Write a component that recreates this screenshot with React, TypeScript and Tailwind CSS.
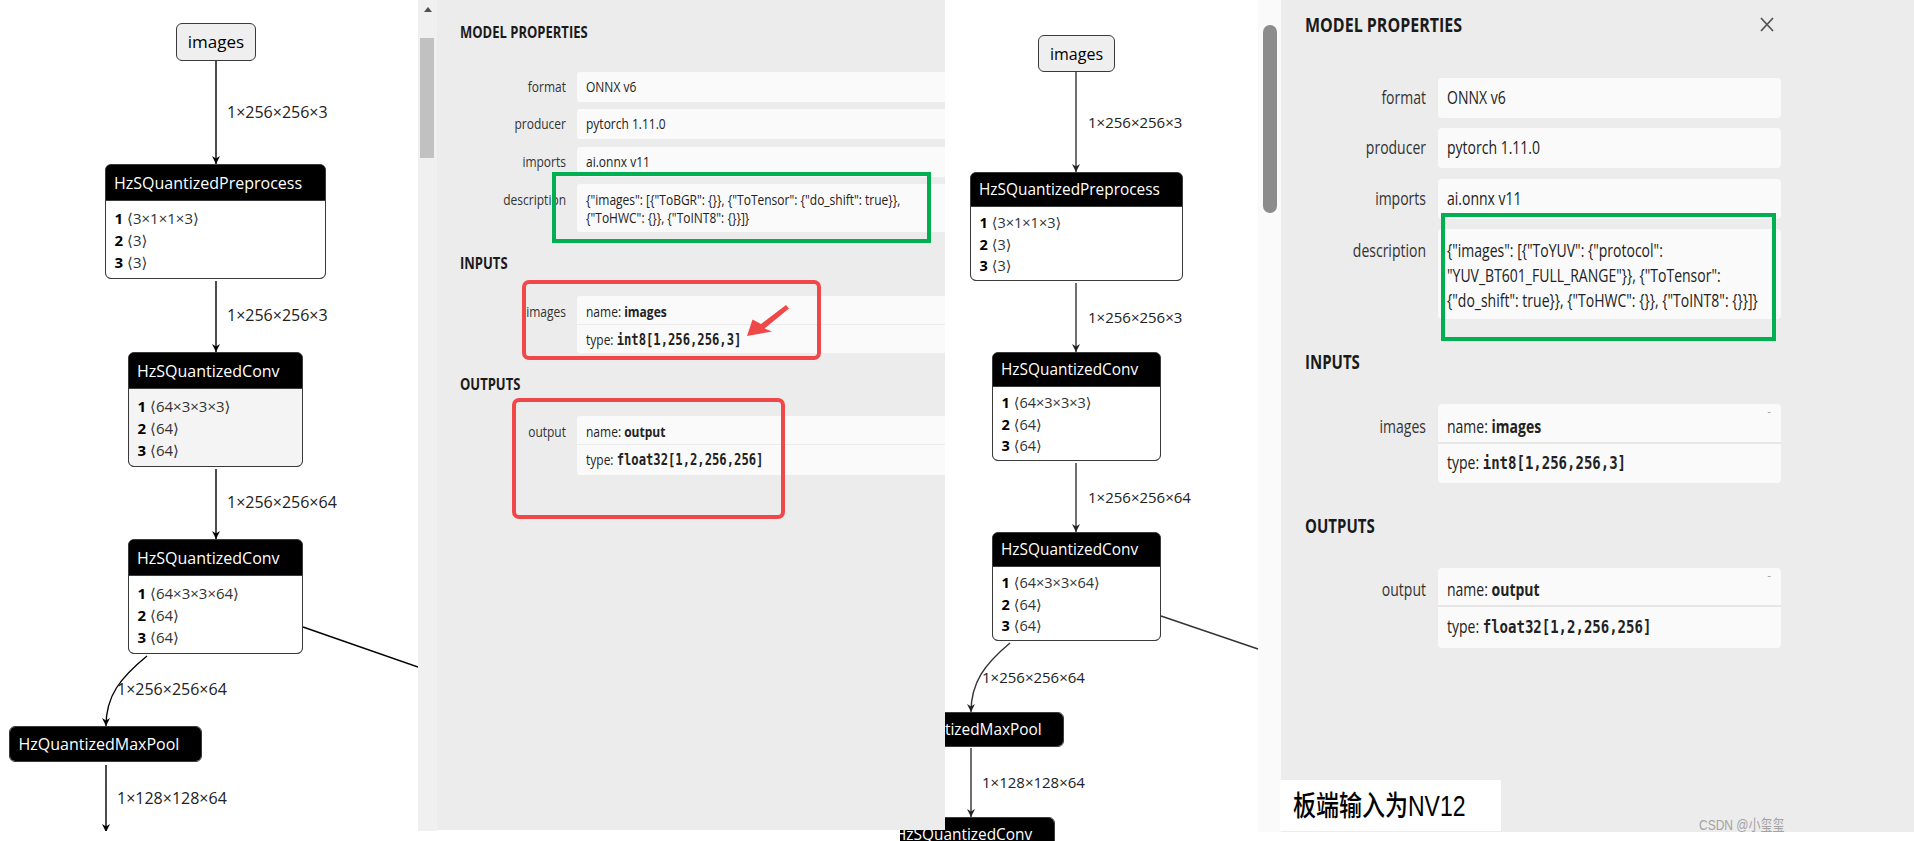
import React from "react";

type Row = [string, string];
type NodeSpec = { x: number; y: number; w: number; title: string; rows?: Row[]; shade?: boolean };

const SZ = {
  L: {
    head: "h-[36px] leading-[36px] text-[16px] pl-[8px] border-b border-[#3a3a3a]",
    only: "h-[34px] leading-[34px] text-[16px] pl-[8.5px]",
    body: "pt-[6px] pb-[5px] pl-[8.5px]",
    row: "h-[22px] leading-[22px] text-[15px]",
  },
  R: {
    head: "h-[34px] leading-[34px] text-[15.4px] pl-[8px] border-b border-[#3a3a3a]",
    only: "h-[33px] leading-[33px] text-[15.4px] pl-[8px]",
    body: "pt-[5px] pb-[3.5px] pl-[8.5px]",
    row: "h-[21.5px] leading-[21.5px] text-[14.5px]",
  },
};

function T({ children, c = "" }: { children: React.ReactNode; c?: string }) {
  return <span className={"inline-block scale-y-[1.25] " + c}>{children}</span>;
}

function GNode({ n, s }: { n: NodeSpec; s: "L" | "R" }) {
  const c = SZ[s];
  return (
    <div
      className="absolute rounded-[6px] border-[1.5px] border-[#3a3a3a] overflow-hidden bg-black"
      style={{ left: n.x, top: n.y, width: n.w }}
    >
      <div className={"bg-black text-white whitespace-nowrap " + (n.rows ? c.head : c.only)}>{n.title}</div>
      {n.rows && (
        <div className={(n.shade ? "bg-[#f4f4f4] " : "bg-white ") + c.body}>
          {n.rows.map(([a, b]) => (
            <div key={a} className={"whitespace-nowrap " + c.row}>
              <span className="font-bold text-black">{a}</span>
              <span className="ml-[4px] text-[#333] font-['Open_Sans','DejaVu_Sans',sans-serif]">
                {"\u27E8" + b + "\u27E9"}
              </span>
            </div>
          ))}
        </div>
      )}
    </div>
  );
}

function InputNode({ x, y, w, h, big }: { x: number; y: number; w: number; h: number; big: boolean }) {
  return (
    <div
      className={
        "absolute rounded-[6px] border-[1.5px] border-[#3a3a3a] bg-[#efefef] flex items-center justify-center text-black " +
        (big ? "text-[17px]" : "text-[16px]")
      }
      style={{ left: x, top: y, width: w, height: h }}
    >
      images
    </div>
  );
}

function ELabel({ x, y, t, big }: { x: number; y: number; t: string; big: boolean }) {
  return (
    <div
      className={
        "absolute whitespace-nowrap leading-[20px] text-[#222] " + (big ? "text-[16px]" : "text-[15px]")
      }
      style={{ left: x, top: y }}
    >
      {t}
    </div>
  );
}

function LeftGraph() {
  const nodes: NodeSpec[] = [
    { x: 105, y: 164, w: 221, title: "HzSQuantizedPreprocess", rows: [["1", "3×1×1×3"], ["2", "3"], ["3", "3"]] },
    { x: 128, y: 352, w: 175, title: "HzSQuantizedConv", rows: [["1", "64×3×3×3"], ["2", "64"], ["3", "64"]], shade: true },
    { x: 128, y: 539, w: 175, title: "HzSQuantizedConv", rows: [["1", "64×3×3×64"], ["2", "64"], ["3", "64"]] },
    { x: 9, y: 726, w: 193, title: "HzQuantizedMaxPool" },
  ];
  return (
    <div className="relative w-[418px] h-[831px] shrink-0 bg-white">
      <svg className="absolute left-0 top-0" width="418" height="831">
        <defs>
          <marker id="arrL" viewBox="0 0 10 10" refX="10" refY="5" markerWidth="8" markerHeight="8" markerUnits="userSpaceOnUse" orient="auto">
            <path d="M0,0 L10,5 L0,10 L3,5 z" fill="#000" />
          </marker>
        </defs>
        <g stroke="#000" strokeWidth="1.4" fill="none">
          <path d="M216,61 V164" markerEnd="url(#arrL)" />
          <path d="M216,281 V352" markerEnd="url(#arrL)" />
          <path d="M216,469 V539" markerEnd="url(#arrL)" />
          <path d="M147,656 C120,678 106,696 106,726" markerEnd="url(#arrL)" />
          <path d="M303,627 L418,667" />
          <path d="M106,765 V832" markerEnd="url(#arrL)" />
        </g>
      </svg>
      <InputNode x={176} y={23} w={80} h={38} big={true} />
      {nodes.map((n, i) => (
        <GNode key={i} n={n} s="L" />
      ))}
      <ELabel x={227} y={102} t="1×256×256×3" big={true} />
      <ELabel x={227} y={305} t="1×256×256×3" big={true} />
      <ELabel x={227} y={492} t="1×256×256×64" big={true} />
      <ELabel x={117} y={679} t="1×256×256×64" big={true} />
      <ELabel x={117} y={788} t="1×128×128×64" big={true} />
    </div>
  );
}

function RightGraph() {
  const nodes: NodeSpec[] = [
    { x: 25, y: 172, w: 213, title: "HzSQuantizedPreprocess", rows: [["1", "3×1×1×3"], ["2", "3"], ["3", "3"]] },
    { x: 47, y: 352, w: 169, title: "HzSQuantizedConv", rows: [["1", "64×3×3×3"], ["2", "64"], ["3", "64"]] },
    { x: 47, y: 532, w: 169, title: "HzSQuantizedConv", rows: [["1", "64×3×3×64"], ["2", "64"], ["3", "64"]] },
    { x: -67, y: 712, w: 186, title: "HzQuantizedMaxPool" },
  ];
  return (
    <div className="relative w-[313px] h-[832px] shrink-0 bg-white">
      <svg className="absolute left-0 top-0 overflow-visible" width="313" height="841">
        <defs>
          <marker id="arrR" viewBox="0 0 10 10" refX="10" refY="5" markerWidth="8" markerHeight="8" markerUnits="userSpaceOnUse" orient="auto">
            <path d="M0,0 L10,5 L0,10 L3,5 z" fill="#222" />
          </marker>
        </defs>
        <g stroke="#333" strokeWidth="1.4" fill="none">
          <path d="M131,72 V172" markerEnd="url(#arrR)" />
          <path d="M131,283 V352" markerEnd="url(#arrR)" />
          <path d="M131,463 V532" markerEnd="url(#arrR)" />
          <path d="M65,643 C40,664 26,682 26,712" markerEnd="url(#arrR)" />
          <path d="M216,616 L313,649" />
          <path d="M26,748 V817" markerEnd="url(#arrR)" />
        </g>
      </svg>
      <InputNode x={93} y={35} w={77} h={37} big={false} />
      {nodes.map((n, i) => (
        <GNode key={i} n={n} s="R" />
      ))}
      <div className="absolute left-[-45px] top-[817px] w-[160px] h-[30px] overflow-hidden">
        <GNode n={{ x: -14, y: 0, w: 169, title: "HzSQuantizedConv" }} s="R" />
      </div>
      <ELabel x={143} y={112} t="1×256×256×3" big={false} />
      <ELabel x={143} y={307} t="1×256×256×3" big={false} />
      <ELabel x={143} y={487} t="1×256×256×64" big={false} />
      <ELabel x={37} y={667} t="1×256×256×64" big={false} />
      <ELabel x={37} y={772} t="1×128×128×64" big={false} />
    </div>
  );
}

function LeftScroll() {
  return (
    <div className="w-[19px] h-[831px] shrink-0 bg-[#f0f0f0] flex flex-col items-start pt-[7px]">
      <svg className="ml-[5.5px]" width="8" height="5" viewBox="0 0 8 5">
        <path d="M0,5 L4,0 L8,5 z" fill="#505050" />
      </svg>
      <div className="mt-[26px] ml-[2px] w-[14px] h-[120px] bg-[#c1c1c1]" />
    </div>
  );
}

function RightScroll() {
  return (
    <div className="w-[23px] h-[832px] shrink-0 bg-[#fafafa] pt-[25px] pl-[5px]">
      <div className="w-[14px] h-[188px] rounded-full bg-[#8c8c8c]" />
    </div>
  );
}

const MONO = "font-bold font-['DejaVu_Sans_Mono','Liberation_Mono',monospace]";

function LeftPanel() {
  const lab = "w-[129px] shrink-0 text-right text-[#333]";
  const val = "ml-[11px] w-[440px] shrink-0 bg-[#fafafa] rounded-[3px] pl-[9px] text-[#222] whitespace-nowrap";
  const head = "pl-[23px] h-[20px] font-bold text-[13px] leading-[20px] text-[#1a1a1a]";
  return (
    <div className="relative z-10 w-[508px] h-[830px] shrink-0 bg-[#ececec] overflow-hidden text-[12px]">
      <div className={head + " mt-[22px]"}><T>MODEL PROPERTIES</T></div>
      <div className="mt-[30px] flex leading-[30px]">
        <div className={lab}><T>format</T></div>
        <div className={val + " h-[30px]"}><T>ONNX v6</T></div>
      </div>
      <div className="mt-[7px] flex leading-[30px]">
        <div className={lab}><T>producer</T></div>
        <div className={val + " h-[30px]"}><T>pytorch 1.11.0</T></div>
      </div>
      <div className="mt-[8px] flex leading-[30px]">
        <div className={lab}><T>imports</T></div>
        <div className={val + " h-[30px]"}><T>ai.onnx v11</T></div>
      </div>
      <div className="mt-[7px] flex leading-[18px]">
        <div className={lab + " pt-[7px]"}><T>description</T></div>
        <div className={val + " h-[48px] pt-[7px]"}>
          <T>{'{"images": [{"ToBGR": {}}, {"ToTensor": {"do_shift": true}},'}</T>
          <br />
          <T>{'{"ToHWC": {}}, {"ToINT8": {}}]}'}</T>
        </div>
      </div>
      <div className={head + " mt-[21px]"}><T>INPUTS</T></div>
      <div className="mt-[23px] flex">
        <div className={lab + " leading-[31px]"}><T>images</T></div>
        <div className="ml-[11px] w-[440px] shrink-0 rounded-[3px] overflow-hidden text-[#222] whitespace-nowrap">
          <div className="h-[29px] leading-[31px] bg-[#fafafa] pl-[9px] border-b border-[#ebebeb]">
            <T>name: <span className="font-bold">images</span></T>
          </div>
          <div className="h-[28px] leading-[30px] bg-[#fafafa] pl-[9px]">
            <T>type: <span className={MONO + " text-[12.2px]"}>int8[1,256,256,3]</span></T>
          </div>
        </div>
      </div>
      <div className={head + " mt-[21px]"}><T>OUTPUTS</T></div>
      <div className="mt-[22px] flex">
        <div className={lab + " leading-[31px]"}><T>output</T></div>
        <div className="ml-[11px] w-[440px] shrink-0 rounded-[3px] overflow-hidden text-[#222] whitespace-nowrap">
          <div className="h-[29px] leading-[31px] bg-[#fafafa] pl-[9px] border-b border-[#ebebeb]">
            <T>name: <span className="font-bold">output</span></T>
          </div>
          <div className="h-[30px] leading-[30px] bg-[#fafafa] pl-[9px]">
            <T>type: <span className={MONO + " text-[12.2px]"}>float32[1,2,256,256]</span></T>
          </div>
        </div>
      </div>
    </div>
  );
}

function RightPanel() {
  const lab = "w-[145px] shrink-0 text-right text-[#333]";
  const val = "ml-[12px] w-[343px] shrink-0 bg-[#fafafa] rounded-[4px] pl-[9px] text-[#222] whitespace-nowrap";
  const head = "pl-[24px] h-[22px] font-bold text-[15px] leading-[22px] text-[#1a1a1a]";
  return (
    <div className="relative w-[633px] h-[832px] shrink-0 bg-[#ececec] text-[14px]">
      <div className="flex items-center justify-between pr-[140px] mt-[13px]">
        <div className="pl-[24px] h-[22px] font-bold text-[16px] leading-[22px] text-[#1a1a1a]"><T>MODEL PROPERTIES</T></div>
        <svg width="14" height="15" viewBox="0 0 14 15">
          <path d="M1,1 L13,14 M13,1 L1,14" stroke="#555" strokeWidth="1.8" />
        </svg>
      </div>
      <div className="mt-[43px] flex leading-[40px]">
        <div className={lab}><T>format</T></div>
        <div className={val + " h-[40px]"}><T>ONNX v6</T></div>
      </div>
      <div className="mt-[10px] flex leading-[40px]">
        <div className={lab}><T>producer</T></div>
        <div className={val + " h-[40px]"}><T>pytorch 1.11.0</T></div>
      </div>
      <div className="mt-[11px] flex leading-[40px]">
        <div className={lab}><T>imports</T></div>
        <div className={val + " h-[40px]"}><T>ai.onnx v11</T></div>
      </div>
      <div className="mt-[10px] flex leading-[25px]">
        <div className={lab + " pt-[9px]"}><T>description</T></div>
        <div className={val + " h-[90px] pt-[9px]"}>
          <T>{'{"images": [{"ToYUV": {"protocol":'}</T>
          <br />
          <T>{'"YUV_BT601_FULL_RANGE"}}, {"ToTensor":'}</T>
          <br />
          <T>{'{"do_shift": true}}, {"ToHWC": {}}, {"ToINT8": {}}]}'}</T>
        </div>
      </div>
      <div className={head + " mt-[31px]"}><T>INPUTS</T></div>
      <div className="mt-[32px] flex">
        <div className={lab + " pt-[9px] leading-[28px]"}><T>images</T></div>
        <div className="relative ml-[12px] w-[343px] shrink-0 rounded-[4px] overflow-hidden text-[#222] whitespace-nowrap">
          <div className="h-[40px] pt-[9px] leading-[28px] bg-[#fafafa] pl-[9px] border-b-2 border-[#e6e6e6]">
            <T>name: <span className="font-bold">images</span></T>
          </div>
          <div className="h-[39px] leading-[37px] bg-[#fafafa] pl-[9px]">
            <T>type: <span className={MONO + " text-[14px]"}>int8[1,256,256,3]</span></T>
          </div>
          <div className="absolute right-[10px] top-[0px] text-[12px] leading-[16px] text-[#aaa]">-</div>
        </div>
      </div>
      <div className={head + " mt-[31px]"}><T>OUTPUTS</T></div>
      <div className="mt-[32px] flex">
        <div className={lab + " pt-[8px] leading-[28px]"}><T>output</T></div>
        <div className="relative ml-[12px] w-[343px] shrink-0 rounded-[4px] overflow-hidden text-[#222] whitespace-nowrap">
          <div className="h-[39px] pt-[8px] leading-[28px] bg-[#fafafa] pl-[9px] border-b-2 border-[#e6e6e6]">
            <T>name: <span className="font-bold">output</span></T>
          </div>
          <div className="h-[41px] leading-[39px] bg-[#fafafa] pl-[9px]">
            <T>type: <span className={MONO + " text-[14px]"}>float32[1,2,256,256]</span></T>
          </div>
          <div className="absolute right-[10px] top-[0px] text-[12px] leading-[16px] text-[#aaa]">-</div>
        </div>
      </div>
      <div className="absolute left-[418px] top-[817px] text-[12px] leading-[16px] text-[#a3a3a3] whitespace-nowrap font-['Liberation_Sans','Noto_Sans_CJK_SC',sans-serif]">
        <T>CSDN @小玺玺</T>
      </div>
    </div>
  );
}

function Annotations() {
  return (
    <>
      <div className="absolute z-20 left-[552px] top-[172px] w-[379px] h-[71px] border-[4px] border-[#00b050]" />
      <div className="absolute z-20 left-[1441px] top-[213px] w-[335px] h-[128px] border-[4px] border-[#00b050]" />
      <div className="absolute z-20 left-[522px] top-[280px] w-[299px] h-[80px] border-[4px] border-[#f04848] rounded-[7px]" />
      <div className="absolute z-20 left-[512px] top-[398px] w-[273px] h-[121px] border-[4px] border-[#f04848] rounded-[7px]" />
      <svg className="absolute z-20 left-[740px] top-[300px]" width="55" height="42" viewBox="0 0 55 42">
        <path d="M7,36 L12.5,19.5 L21,24 L46,5 L49,8.5 L24.5,28.5 L32,31.5 z" fill="#f04848" />
      </svg>
      <div className="absolute z-20 left-[1280px] top-[780px] w-[221px] h-[51px] bg-white pl-[13px] pt-[2px] leading-[49px] text-[23px] font-medium text-black whitespace-nowrap font-['Liberation_Sans','Noto_Sans_CJK_SC',sans-serif]">
        <T>板端输入为NV12</T>
      </div>
    </>
  );
}

export default function App() {
  return (
    <div className="relative w-[1914px] h-[841px] overflow-hidden bg-white text-[#222] font-['Open_Sans','Noto_Sans',sans-serif]">
      <div className="flex items-start">
        <LeftGraph />
        <LeftScroll />
        <LeftPanel />
        <RightGraph />
        <RightScroll />
        <RightPanel />
      </div>
      <Annotations />
    </div>
  );
}
